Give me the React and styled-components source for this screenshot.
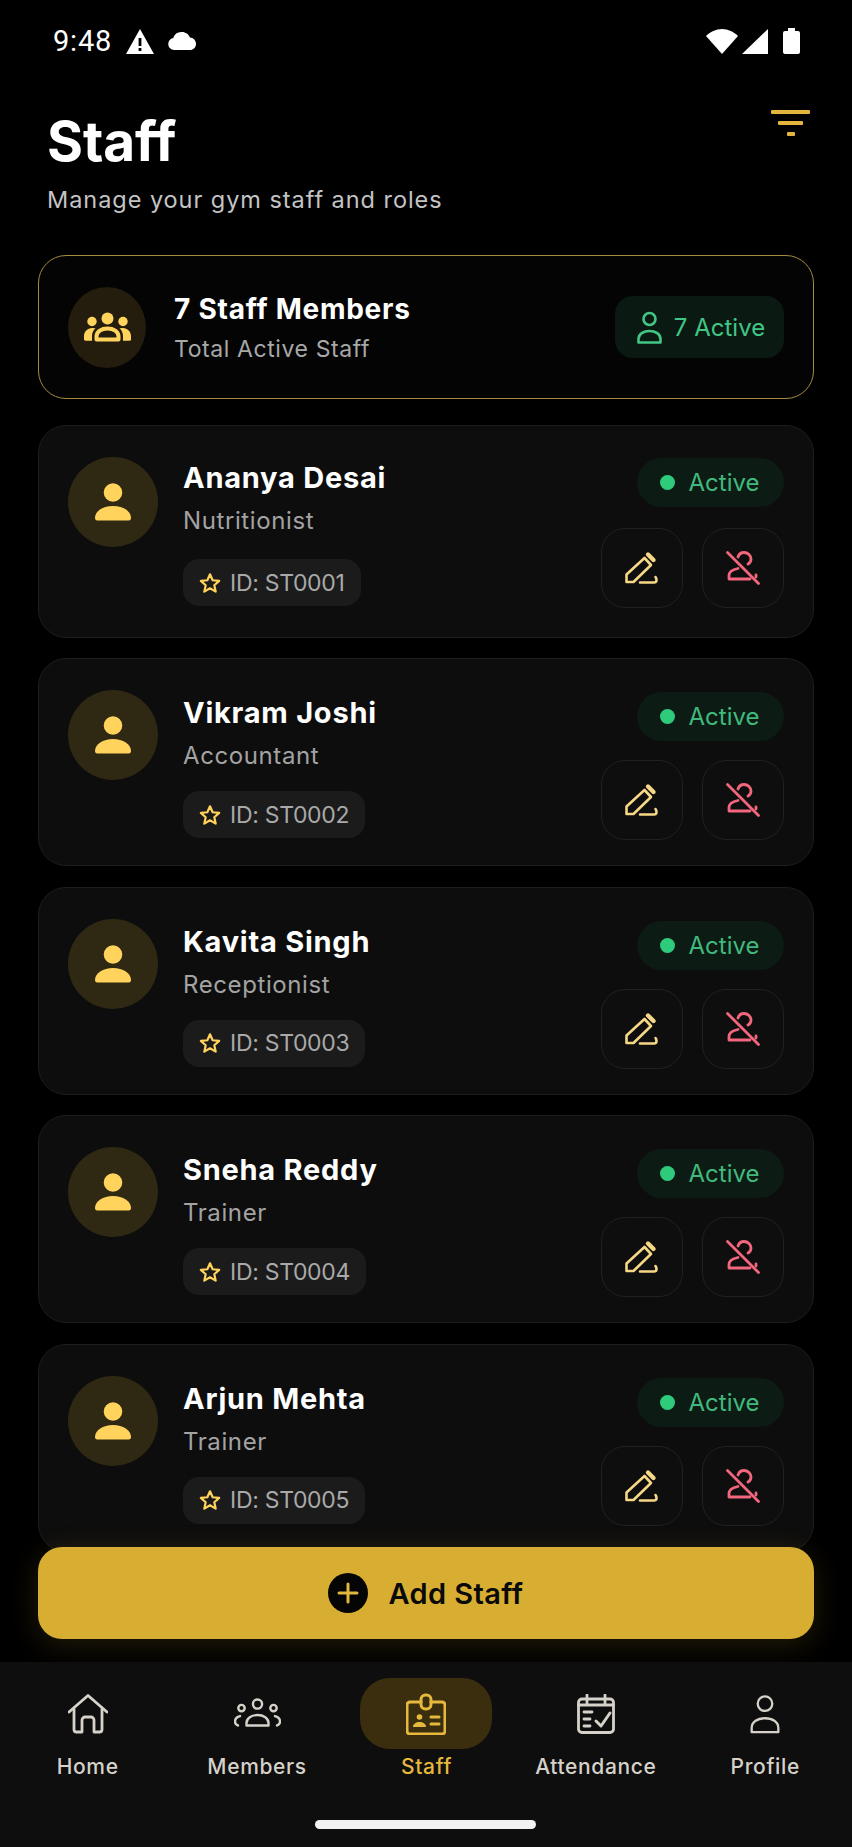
import React from "react";
import styled, { createGlobalStyle } from "styled-components";

const Global = createGlobalStyle`
  html, body { margin: 0; padding: 0; background: #000; }
  * { box-sizing: border-box; }
  body { font-family: "Inter", "Noto Sans", sans-serif; }
`;

const Phone = styled.div`
  width: 852px; height: 1847px; background: #000; color: #fff;
  display: flex; flex-direction: column; overflow: hidden;
`;
const StatusBar = styled.div`
  height: 82px; padding: 0 52px 0 53px; flex: none;
  display: flex; align-items: center; justify-content: space-between;
`;
const StatusGroup = styled.div`
  display: flex; align-items: center; gap: ${p => p.$gap || 14}px;
`;
const Time = styled.span`
  font-family: Roboto, sans-serif; font-size: 29px; font-weight: 400; letter-spacing: .8px; line-height: 1;
`;
const BatterySlot = styled.span`
  display: flex; margin-left: 11px;
`;
const Header = styled.header`
  flex: none; height: 173px; padding: 25px 42px 0 47px;
  display: flex; justify-content: space-between; align-items: flex-start;
`;
const Title = styled.h1`
  margin: 0; font-size: 55px; line-height: 68px; font-weight: 700; letter-spacing: -.1px;
`;
const Subtitle = styled.p`
  margin: 8px 0 0; font-size: 23.5px; line-height: 34px; color: #c4c4c4; letter-spacing: .95px;
`;
const FilterBtn = styled.div`
  display: flex; flex-direction: column; align-items: center; gap: 7px; width: 39px; margin-top: 3px;
`;
const FilterBar = styled.span`
  display: block; height: 4px; width: ${p => p.$w}px; background: #e3b53d; border-radius: 1px;
`;
const Content = styled.main`
  flex: 1; min-height: 0; position: relative; overflow: visible;
  padding: 0 38px; display: flex; flex-direction: column; gap: 20.5px;
`;
const Summary = styled.section`
  flex: none; height: 144px; margin-bottom: 5.5px; border: 1.5px solid #a68a3f; border-radius: 28px; background: #040404;
  display: flex; align-items: center; padding: 0 29px 0 29px;
`;
const SummaryIcon = styled.div`
  width: 78px; height: 81px; border-radius: 50%; background: #241c0c;
  display: flex; align-items: center; justify-content: center; flex: none;
`;
const SummaryText = styled.div`
  flex: 1; margin-left: 28px;
`;
const SummaryTitle = styled.div`
  font-size: 28px; line-height: 40px; font-weight: 700; margin-top: 2px; letter-spacing: .75px;
`;
const SummarySub = styled.div`
  font-size: 23px; line-height: 36px; margin-top: 2px; color: #a8a8a8; letter-spacing: .6px;
`;
const ActiveCount = styled.div`
  width: 169px; height: 62px; padding-left: 3px; border-radius: 18px; background: #0a1a12; color: #41c685;
  display: flex; align-items: center; justify-content: center; gap: 12px; font-size: 24px; font-weight: 400;
`;
const StaffCard = styled.article`
  flex: none; height: ${p => p.$tall ? 212.5 : 208}px; border: 1.5px solid #1d1d1d; border-radius: 28px; background: #0d0d0d;
  display: flex; padding: 31px 29px 0 29px;
`;
const Avatar = styled.div`
  width: 90px; height: 90px; border-radius: 50%; background: #2f2813; flex: none;
  display: flex; align-items: center; justify-content: center;
`;
const StaffInfo = styled.div`
  flex: 1; margin-left: 25px; min-width: 0; padding-top: ${p => p.$tall ? 0 : 2}px;
`;
const StaffName = styled.div`
  font-size: 29px; line-height: 42px; font-weight: 700; letter-spacing: .75px;
`;
const StaffRole = styled.div`
  margin-top: 5px; font-size: 24px; line-height: 34px; color: #a3a3a3; letter-spacing: .6px;
`;
const IdChip = styled.div`
  margin-top: ${p => p.$tall ? 21 : 18}px; display: inline-flex; align-items: center; gap: 9px; height: 47px;
  padding: 0 16px; background: #1b1b1b; border-radius: 16px; color: #a9a9a9; font-size: 23px; letter-spacing: -.3px;
`;
const StaffSide = styled.div`
  display: flex; flex-direction: column; align-items: flex-end; padding-top: ${p => p.$tall ? 1 : 2}px; gap: ${p => p.$tall ? 21 : 19}px;
`;
const StatusPill = styled.div`
  width: 147px; height: 49px; padding-right: 2px; border-radius: 25px; background: #0c1b13; color: #41b97e;
  display: flex; align-items: center; justify-content: center; gap: 14px; font-size: 24px; font-weight: 400;
`;
const Dot = styled.span`
  width: 15px; height: 15px; border-radius: 50%; background: #2fcb7c;
`;
const Actions = styled.div`
  display: flex; gap: 19px;
`;
const IconBtn = styled.div`
  width: 82px; height: 80px; border: 1.5px solid #212121; border-radius: 24px; background: #0e0e0e;
  display: flex; align-items: center; justify-content: center;
`;
const AddButton = styled.button`
  position: absolute; left: 38px; right: 38px; top: ${1547 - 255}px; height: 92px; border: 0; border-radius: 24px;
  background: #d8ae32; color: #0a0a0a; font: 600 29px "Inter", sans-serif; letter-spacing: .4px; z-index: 2;
  display: flex; align-items: center; justify-content: center; gap: 20px;
  box-shadow: 0 6px 30px rgba(216,174,50,.16);
`;
const Nav = styled.nav`
  flex: none; height: 185px; background: #0e0e0e; position: relative; z-index: 3;
  display: grid; grid-template-columns: repeat(5, 1fr); padding: 16px 2px 0 3px;
  align-items: start;
`;
const NavItem = styled.div`
  display: flex; flex-direction: column; align-items: center;
  color: ${p => p.$active ? "#e6b83c" : "#d6d2c9"};
  font-size: 21px; font-weight: 500; letter-spacing: .65px;
`;
const NavIcon = styled.div`
  width: 132px; height: 71px; border-radius: 30px; background: ${p => p.$active ? "#3a2e0f" : "transparent"};
  display: flex; align-items: center; justify-content: center;
`;
const NavLabel = styled.span`
  line-height: 30px; margin-top: 3px;
`;
const HomeBar = styled.div`
  position: absolute; left: 315px; bottom: 18px; width: 221px; height: 9px; border-radius: 5px; background: #f2f2f2;
`;

const Warning = () => (
  <svg width="28" height="25" viewBox="0 0 28 25"><path fill="#fff" fillRule="evenodd" d="M14 0 28 25H0ZM12.6 9v8h2.8V9Zm0 10v3h2.8v-3Z" /></svg>
);
const Cloud = () => (
  <svg width="28" height="18" viewBox="0 0 28 18"><path fill="#fff" d="M6 18a6 6 0 0 1-.8-11.9A9 9 0 0 1 14 0c3.6 0 6.6 2.2 8 5.600A6.300 6.300 0 0 1 28 12c0 3.400-2.700 6-6 6Z" /></svg>
);
const Wifi = () => (
  <svg width="32" height="25" viewBox="0 0 32 25"><path fill="#fff" d="M16 25 0 7C4 3 10 0 16 0s12 3 16 7Z" /></svg>
);
const Signal = () => (
  <svg width="26" height="25" viewBox="0 0 26 25"><path fill="#fff" d="M26 0v25H0Z" /></svg>
);
const Battery = () => (
  <svg width="17" height="26" viewBox="0 0 17 26"><path fill="#fff" d="M5 0h7v3h3a2 2 0 0 1 2 2v19a2 2 0 0 1-2 2H2a2 2 0 0 1-2-2V5a2 2 0 0 1 2-2h3Z" /></svg>
);
const GroupIcon = ({ color, size = 47, outline }) => (
  <svg width={size} height={size * 0.64} viewBox="0 0 47 30" fill="none" stroke={color} strokeLinejoin="round" strokeLinecap="round">
    {outline ? (
      <g strokeWidth="2.400">
        <circle cx="23.500" cy="6" r="4.600" /><circle cx="7.500" cy="10" r="3.200" /><circle cx="39.500" cy="10" r="3.200" />
        <path d="M12.500 27.500v-2.500c0-5 5-8 11-8s11 3 11 8v2.500Z" />
        <path d="M6 18c-3 .8-5 3-5 5.500 0 2 1 3.500 3 4M41 18c3 .8 5 3 5 5.500 0 2-1 3.500-3 4" />
      </g>
    ) : (
      <g>
        <circle cx="23.500" cy="6.500" r="6" fill={color} stroke="none" /><circle cx="8" cy="9.500" r="4.700" fill={color} stroke="none" /><circle cx="39" cy="9.500" r="4.700" fill={color} stroke="none" />
        <path d="M12.500 27.500v-3c0-5 5-8 11-8s11 3 11 8v3Z" strokeWidth="4" />
        <path d="M8 16c-4.500 .5-8 3.500-8 8v3.500c0 .8.6 1.200 1.500 1.200H8v-4.500c0-3 1-6 3.500-8Z M39 16c4.500 .5 8 3.500 8 8v3.500c0 .8-.6 1.200-1.500 1.200H39v-4.500c0-3-1-6-3.500-8Z" fill={color} stroke="none" />
      </g>
    )}
  </svg>
);
const PersonOutline = ({ color, w = 25, h = 33, sw = 2.600 }) => (
  <svg width={w} height={h} viewBox="0 0 25 33" fill="none" stroke={color} strokeWidth={sw} strokeLinejoin="round">
    <circle cx="12.500" cy="8" r="6" />
    <path d="M1.500 31.500v-3.500c0-5 5-8 11-8s11 3 11 8v3.500Z" />
  </svg>
);
const PersonSolid = () => (
  <svg width="36" height="38" viewBox="0 0 36 38" fill="#ffd35c">
    <circle cx="18" cy="9.500" r="9.300" />
    <path d="M0 35c0-7 8-12 18-12s18 5 18 12c0 1.500-.8 2.500-2.200 2.500H2.200C.8 37.500 0 36.500 0 35Z" />
  </svg>
);
const Star = () => (
  <svg width="22" height="22" viewBox="0 0 24 24" fill="none" stroke="#ffd35c" strokeWidth="2.400" strokeLinejoin="round">
    <path d="M12 2.500 14.900 9l7.100.7-5.300 4.700 1.500 7-6.200-3.600-6.200 3.600 1.500-7L2 9.700 9.100 9Z" />
  </svg>
);
const Pen = () => (
  <svg width="34" height="34" viewBox="0 0 34 34" fill="none" stroke="#f6d785" strokeWidth="2.600" strokeLinejoin="round" strokeLinecap="round">
    <path d="M1.500 31v-7.500L19.500 7l6.500 7L8.500 31Z" />
    <path d="M23 3.500 28.500 9" strokeWidth="4.400" />
    <path d="M15 31.500h14c1.600 0 2.500-1 2.500-2.500 0-1-.3-2-1-3" />
  </svg>
);
const PersonOff = () => (
  <svg width="34" height="34" viewBox="0 0 34 34" fill="none" stroke="#f2667e" strokeWidth="2.800" strokeLinejoin="round" strokeLinecap="round">
    <path d="M12 6c1-3 3-4.500 6-4.500 4 0 7 3 7 6.500 0 2-1 4-3 5" />
    <path d="M12 17.500c-5 1-9 3-9 7v3.500h21" />
    <path d="M30 24v2" />
    <path d="M1.500 1.500 32.500 32.500" />
  </svg>
);
const Plus = () => (
  <svg width="40" height="40" viewBox="0 0 40 40"><circle cx="20" cy="20" r="20" fill="#050505" /><path d="M20 11v18M11 20h18" stroke="#e2b73e" strokeWidth="3" strokeLinecap="round" /></svg>
);
const HomeIcon = () => (
  <svg width="40" height="40" viewBox="0 0 40 40" fill="none" stroke="#d6d2c9" strokeWidth="2.800" strokeLinejoin="round" strokeLinecap="round">
    <path d="M1 18 20 1.500 39 18" /><path d="M6 15v20.500a2.500 2.500 0 0 0 2.500 2.500H14V26a3 3 0 0 1 3-3h6a3 3 0 0 1 3 3v12h5.500a2.500 2.500 0 0 0 2.500-2.500V15" />
  </svg>
);
const BadgeIcon = () => (
  <svg width="40" height="42" viewBox="0 0 40 42" fill="none" stroke="#e6b83c" strokeWidth="3" strokeLinejoin="round" strokeLinecap="round">
    <path d="M15 9H4a3 3 0 0 0-3 3v26a3 3 0 0 0 3 3h32a3 3 0 0 0 3-3V12a3 3 0 0 0-3-3H25" />
    <rect x="15" y="2" width="10" height="14" rx="4.500" />
    <circle cx="13.500" cy="24" r="2.800" fill="#e6b83c" stroke="none" />
    <path d="M7 34c0-3 3-5 6.500-5s6.500 2 6.500 5Z" fill="#e6b83c" stroke="none" />
    <path d="M25 24h8M25 31h8" />
  </svg>
);
const AttendanceIcon = () => (
  <svg width="38" height="40" viewBox="0 0 38 40" fill="none" stroke="#d6d2c9" strokeWidth="2.800" strokeLinejoin="round" strokeLinecap="round">
    <rect x="1.500" y="5" width="35" height="33.500" rx="3.500" />
    <path d="M10 1v8M28 1v8M1.500 11h35" />
    <path d="M7 18h8M7 25h6M7 32h6" />
    <path d="M19 27l5 5 9-13" strokeWidth="3" />
  </svg>
);

const staff = [
  { name: "Ananya Desai", role: "Nutritionist", id: "ST0001", tall: true },
  { name: "Vikram Joshi", role: "Accountant", id: "ST0002" },
  { name: "Kavita Singh", role: "Receptionist", id: "ST0003" },
  { name: "Sneha Reddy", role: "Trainer", id: "ST0004" },
  { name: "Arjun Mehta", role: "Trainer", id: "ST0005" },
];

const nav = [
  { label: "Home", icon: <HomeIcon /> },
  { label: "Members", icon: <GroupIcon color="#d6d2c9" outline size={47} /> },
  { label: "Staff", icon: <BadgeIcon />, active: true },
  { label: "Attendance", icon: <AttendanceIcon /> },
  { label: "Profile", icon: <PersonOutline color="#d6d2c9" w={36} h={40} sw={1.900} /> },
];

export default function App() {
  return (
    <Phone>
      <Global />
      <StatusBar>
        <StatusGroup $gap={14}>
          <Time>9:48</Time><Warning /><Cloud />
        </StatusGroup>
        <StatusGroup $gap={4}>
          <Wifi /><Signal /><BatterySlot><Battery /></BatterySlot>
        </StatusGroup>
      </StatusBar>
      <Header>
        <div>
          <Title>Staff</Title>
          <Subtitle>Manage your gym staff and roles</Subtitle>
        </div>
        <FilterBtn>
          <FilterBar $w={39} /><FilterBar $w={25} /><FilterBar $w={8} />
        </FilterBtn>
      </Header>
      <Content>
        <Summary>
          <SummaryIcon><GroupIcon color="#ffd35c" /></SummaryIcon>
          <SummaryText>
            <SummaryTitle>7 Staff Members</SummaryTitle>
            <SummarySub>Total Active Staff</SummarySub>
          </SummaryText>
          <ActiveCount><PersonOutline color="#41c685" />7 Active</ActiveCount>
        </Summary>
        {staff.map(s => (
          <StaffCard key={s.id} $tall={s.tall}>
            <Avatar><PersonSolid /></Avatar>
            <StaffInfo $tall={s.tall}>
              <StaffName>{s.name}</StaffName>
              <StaffRole>{s.role}</StaffRole>
              <IdChip $tall={s.tall}><Star />ID: {s.id}</IdChip>
            </StaffInfo>
            <StaffSide $tall={s.tall}>
              <StatusPill><Dot />Active</StatusPill>
              <Actions>
                <IconBtn><Pen /></IconBtn>
                <IconBtn><PersonOff /></IconBtn>
              </Actions>
            </StaffSide>
          </StaffCard>
        ))}
        <AddButton><Plus />Add Staff</AddButton>
      </Content>
      <Nav>
        {nav.map(n => (
          <NavItem key={n.label} $active={n.active}>
            <NavIcon $active={n.active}>{n.icon}</NavIcon>
            <NavLabel>{n.label}</NavLabel>
          </NavItem>
        ))}
        <HomeBar />
      </Nav>
    </Phone>
  );
}
